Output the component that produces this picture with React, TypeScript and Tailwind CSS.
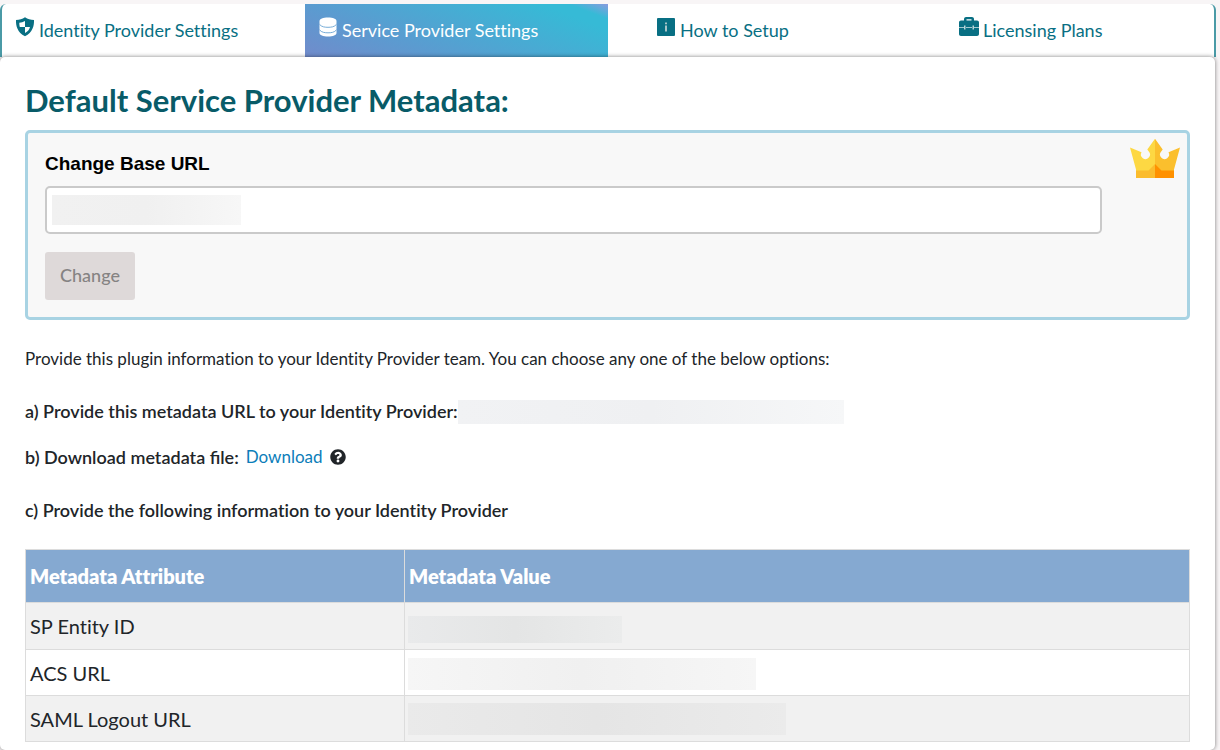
import type { ReactNode } from "react";

function ShieldIcon() {
  return (
    <svg viewBox="0 0 20 20" className="size-5 shrink-0 fill-current" aria-hidden="true">
      <path
        fillRule="evenodd"
        d="M10 .3c2.700 1.800 5.500 2.500 9 2.700c.2 5.800-1.300 12.300-9 16.300C2.300 15.300 .8 8.800 1 3C4.500 2.800 7.300 2.100 10 .3zM10 4C8.200 5 6.300 5.500 4.300 5.800C4.300 7.300 4.400 8.800 4.800 10H10zM10 10V16C12.800 14.500 14.400 12.500 15 10z"
      />
    </svg>
  );
}

function DatabaseIcon() {
  return (
    <svg viewBox="0 0 20 20" className="size-5 shrink-0" aria-hidden="true">
      <path
        fill="currentColor"
        d="M1.500 4c0-2 3.500-3.500 8.500-3.500S18.500 2 18.500 4v12c0 2-3.500 3.500-8.500 3.500S1.500 18 1.500 16z"
      />
      <path
        fill="none"
        stroke="#68a3d3"
        strokeWidth="0.900"
        d="M1.500 7.300C3.500 10 7 10.300 10 10.300S16.500 10 18.500 7.300M1.500 12.800C3.500 15.500 7 15.800 10 15.800S16.500 15.500 18.500 12.800"
      />
    </svg>
  );
}

function InfoIcon() {
  return (
    <svg viewBox="0 0 20 20" className="size-5 shrink-0" aria-hidden="true">
      <rect x="1" y="1" width="18" height="18" rx="1" fill="currentColor" />
      <path fill="#a8c4c8" d="M9 5.500h2v1.800H9zM9 8.500h2v6H9z" />
    </svg>
  );
}

function PortfolioIcon() {
  return (
    <svg viewBox="0 0 20 20" className="size-5 shrink-0" aria-hidden="true">
      <path
        fill="currentColor"
        fillRule="evenodd"
        d="M5 3.500V2C5 .8 6 0 7 0h6c1 0 2 .8 2 2v1.500h3c1.200 0 2 .8 2 2V17c0 1.200-.8 2-2 2H2c-1.200 0-2-.8-2-2V5.500c0-1.200.8-2 2-2zM7.500 3.500h5V2.200h-5z"
      />
      <path stroke="#b5d2d6" strokeWidth="0.900" d="M0 10.500h5M7 10.500h6M15 10.500h5" />
      <path stroke="#e4eff0" strokeWidth="1.200" d="M5.800 8.500v4M14.200 8.500v4" />
    </svg>
  );
}

function CrownIcon() {
  return (
    <svg viewBox="0 0 50 40" className="h-10 w-[50px]" role="img" aria-label="Premium feature">
      <path fill="#fdd843" d="M0 9.500L11.500 14.300A4.500 4.500 0 1 0 18.800 13.500L17.300 11.500L25 .8V40H6V31.500z" />
      <path fill="#fbbf2d" d="M50 9.500L38.500 14.300A4.500 4.500 0 1 1 31.200 13.500L32.700 11.500L25 .8V40H44V31.500z" />
      <path fill="#fbbc2d" d="M6 32.500h12.500l6.500-6.500v14H6z" />
      <path fill="#ff9100" d="M25 26l6.500 6.500H44V40H25z" />
    </svg>
  );
}

function HelpIcon() {
  return (
    <svg viewBox="0 0 512 512" className="size-4" aria-hidden="true">
      <path
        fill="currentColor"
        d="M504 256c0 136.997-111.043 248-248 248S8 392.997 8 256C8 119.083 119.043 8 256 8s248 111.083 248 248zM262.655 90c-54.497 0-89.255 22.957-116.549 63.758-3.536 5.286-2.353 12.415 2.715 16.258l34.699 26.310c5.205 3.947 12.621 3.008 16.665-2.122 17.864-22.658 30.113-35.797 57.303-35.797 20.429 0 45.698 13.148 45.698 32.958 0 14.976-12.363 22.667-32.534 33.976C247.128 238.528 216 254.941 216 296v4c0 6.627 5.373 12 12 12h56c6.627 0 12-5.373 12-12v-1.333c0-28.462 83.186-29.647 83.186-106.667 0-58.002-60.165-102-116.531-102zM256 338c-25.365 0-46 20.635-46 46 0 25.364 20.635 46 46 46s46-20.636 46-46c0-25.365-20.635-46-46-46z"
      />
    </svg>
  );
}

function Tab({ icon, label, className }: { icon: ReactNode; label: string; className: string }) {
  return (
    <a href="#" className={`flex items-start gap-1 pt-[13px] text-lg leading-[26px] ${className}`}>
      {icon}
      <span>{label}</span>
    </a>
  );
}

const rows = [
  {
    name: "SP Entity ID",
    height: "h-[47px]",
    mask: "mt-[6px] h-[27px] w-[214px] bg-linear-to-r from-[#e9eaeb] via-[#e4e5e5] to-[#ebecec]",
  },
  {
    name: "ACS URL",
    height: "h-[46px]",
    mask: "mt-[2px] h-8 w-[348px] bg-linear-to-r from-[#f6f6f6] via-[#f0f0f0] to-[#f6f6f6]",
  },
  {
    name: "SAML Logout URL",
    height: "h-[46px]",
    mask: "h-8 w-[378px] bg-linear-to-r from-[#eaeaea] via-[#e5e5e5] to-[#ebebeb]",
  },
];

export default function App() {
  return (
    <div className="bg-[#f8f5f6] pt-1 pb-4 font-['Lato',sans-serif] text-[#212529] [font-variant-ligatures:no-common-ligatures]">
      <nav className="mr-1 grid h-[53px] grid-cols-4 rounded-t-md border-x-2 border-[#4a9aa6] bg-white text-[#086f83]">
        <Tab icon={<ShieldIcon />} label="Identity Provider Settings" className="pl-[13px]" />
        <Tab
          icon={<DatabaseIcon />}
          label="Service Provider Settings"
          className="bg-[linear-gradient(21deg,#718bcb_0%,#5b9bd0_31%,#36bad6_85%,#36bad6_91%,#8a9bdf_100%)] pl-[13px] text-white"
        />
        <Tab icon={<InfoIcon />} label="How to Setup" className="pl-12" />
        <Tab icon={<PortfolioIcon />} label="Licensing Plans" className="pl-12" />
      </nav>

      <main className="relative mr-[5px] rounded-[5px] bg-white px-[25px] pt-[23px] pb-2 shadow-[0_0_4px_rgba(0,0,0,0.5)]">
        <h1 className="text-[31px] leading-10 font-bold text-[#085b68]">
          Default Service Provider Metadata:
        </h1>

        <section className="mt-[10px] flex items-start justify-between rounded-[5px] border-3 border-[#a8d3e3] bg-[#f8f8f8] pt-[5px] pr-[7px] pb-[17px] pl-[17px]">
          <form className="mr-7 flex-1 pt-[14px]" onSubmit={(e) => e.preventDefault()}>
            <label
              htmlFor="base-url"
              className="block font-['Liberation_Sans',sans-serif] text-[19px] leading-6 font-bold text-black"
            >
              Change Base URL
            </label>
            <div className="mt-[10px] flex h-12 items-center rounded-[5px] border-2 border-[#cacaca] bg-white px-[5px]">
              <span className="h-[30px] w-[189px] shrink-0 bg-linear-to-r from-[#f1f1f1] via-[#f0f0f0] to-[#f7f7f7]" />
              <input id="base-url" type="text" className="h-full min-w-0 flex-1 outline-none" />
            </div>
            <button
              type="submit"
              disabled
              className="mt-[18px] h-12 rounded-[3px] bg-[#ded9d9] px-[15px] pb-[2px] text-lg font-medium text-[#858383]"
            >
              Change
            </button>
          </form>
          <CrownIcon />
        </section>

        <p className="mt-[26px] text-[17px] leading-[26px]">
          Provide this plugin information to your Identity Provider team. You can choose any one of the
          below options:
        </p>
        <div className="mt-[25px] flex h-[27px] items-center text-lg font-semibold">
          a) Provide this metadata URL to your Identity Provider:
          <span className="mt-[3px] h-6 w-[386px] bg-linear-to-r from-[#f1f2f4] via-[#eff0f2] to-[#f6f7f8]" />
        </div>
        <div className="mt-5 flex h-[26px] items-center text-lg">
          <b className="font-semibold [font-variant-ligatures:normal]">b) Download metadata file:</b>
          <a href="#" className="ml-[7px] text-[17px] text-[#0c7db9]">
            Download
          </a>
          <button type="button" aria-label="Help" className="ml-[7px]">
            <HelpIcon />
          </button>
        </div>
        <p className="mt-[27px] text-lg leading-[26px] font-semibold">
          c) Provide the following information to your Identity Provider
        </p>

        <table className="mt-[26px] w-full table-fixed border-collapse text-left text-xl">
          <colgroup>
            <col className="w-[379px]" />
            <col />
          </colgroup>
          <thead>
            <tr className="h-[53px] bg-[#85a9d1] text-white">
              <th className="border border-[#dcdcdc] px-1 font-extrabold">Metadata Attribute</th>
              <th className="border border-[#dcdcdc] px-1 font-extrabold">Metadata Value</th>
            </tr>
          </thead>
          <tbody>
            {rows.map((row) => (
              <tr key={row.name} className={`bg-white odd:bg-[#f1f1f1] ${row.height}`}>
                <td className="border border-[#dcdcdc] px-1">{row.name}</td>
                <td className="border border-[#dcdcdc] px-[3px]">
                  <div className={row.mask} />
                </td>
              </tr>
            ))}
          </tbody>
        </table>
      </main>
    </div>
  );
}
